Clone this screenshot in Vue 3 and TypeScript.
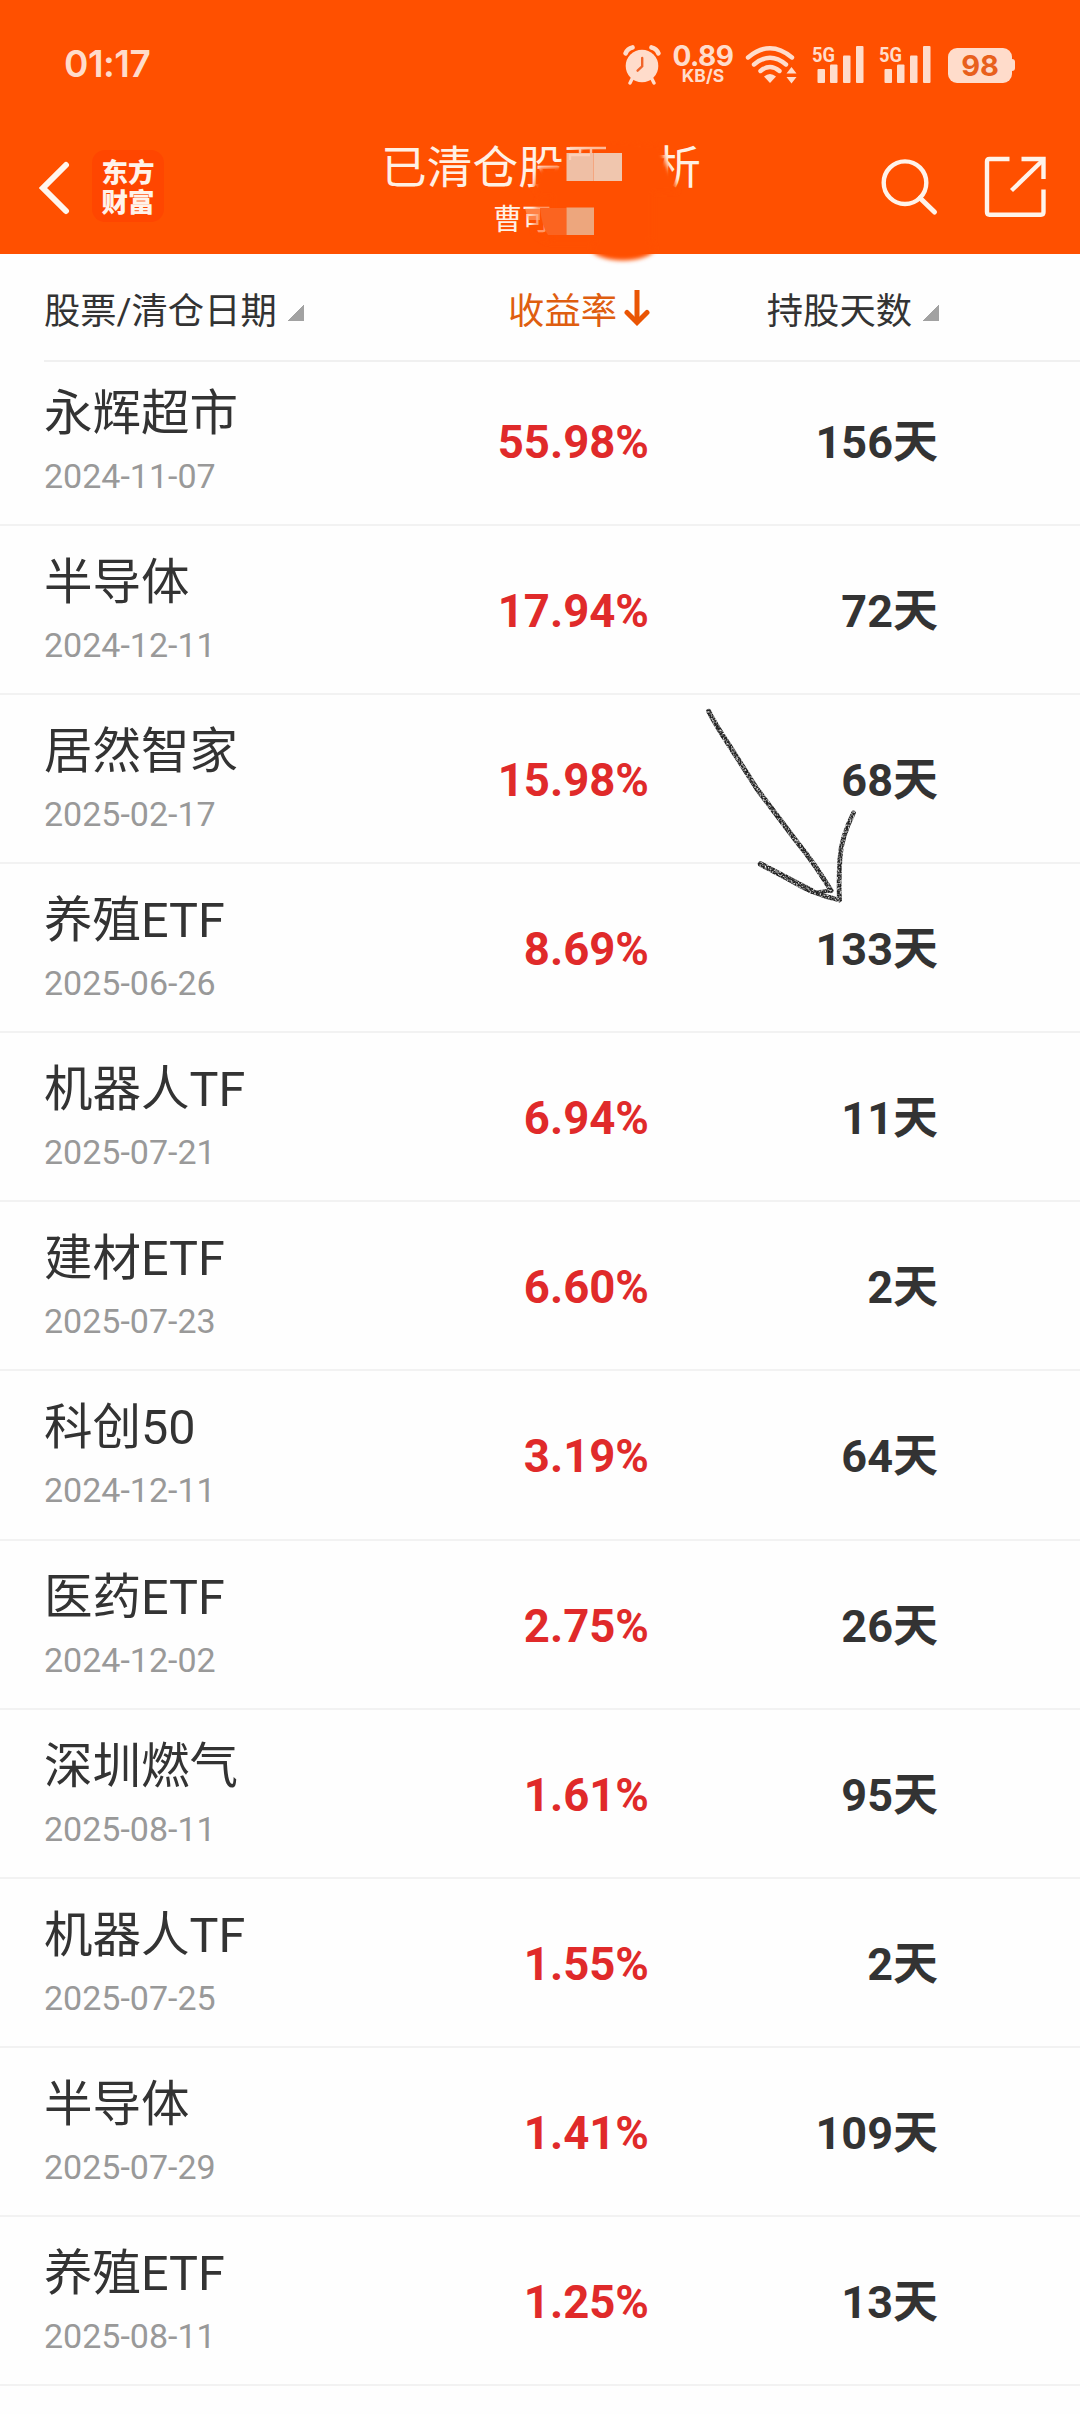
<script setup lang="ts">
interface Position {
  name: string
  date: string
  rate: string
  days: number
}

const positions: Position[] = [
  { name: '永辉超市', date: '2024-11-07', rate: '55.98%', days: 156 },
  { name: '半导体', date: '2024-12-11', rate: '17.94%', days: 72 },
  { name: '居然智家', date: '2025-02-17', rate: '15.98%', days: 68 },
  { name: '养殖ETF', date: '2025-06-26', rate: '8.69%', days: 133 },
  { name: '机器人TF', date: '2025-07-21', rate: '6.94%', days: 11 },
  { name: '建材ETF', date: '2025-07-23', rate: '6.60%', days: 2 },
  { name: '科创50', date: '2024-12-11', rate: '3.19%', days: 64 },
  { name: '医药ETF', date: '2024-12-02', rate: '2.75%', days: 26 },
  { name: '深圳燃气', date: '2025-08-11', rate: '1.61%', days: 95 },
  { name: '机器人TF', date: '2025-07-25', rate: '1.55%', days: 2 },
  { name: '半导体', date: '2025-07-29', rate: '1.41%', days: 109 },
  { name: '养殖ETF', date: '2025-08-11', rate: '1.25%', days: 13 },
]
</script>

<template>
  <div class="screen">
    <header class="top">
      <div class="status">
        <span class="clock">01:17</span>
        <div class="status-icons">
          <svg class="alarm" width="38" height="40" viewBox="0 0 38 40">
            <circle cx="19" cy="21" r="16.3" fill="#ffdccb" />
            <path d="M2.6 8.3Q4.500 3.400 9.500 2.400M35.400 8.300Q33.500 3.400 28.500 2.400" stroke="#ffdccb" stroke-width="4.600" fill="none" stroke-linecap="round" />
            <path d="M9 34l-2 4M29 34l2 4" stroke="#ffdccb" stroke-width="3.400" stroke-linecap="round" />
            <path d="M19.200 13v8.300l-4.600 4.400" stroke="#f0642a" stroke-width="2.400" fill="none" stroke-linecap="round" />
          </svg>
          <div class="speed">
            <b>0.89</b>
            <i>KB/S</i>
          </div>
          <svg class="wifi" width="52" height="40" viewBox="0 0 52 40">
            <g fill="none" stroke="#ffdccb" stroke-width="4.400" stroke-linecap="round">
              <path d="M3 12.500Q25 -6 47 12.500" />
              <path d="M9 19.500Q25 6 41 19.500" />
              <path d="M15.500 26Q25 18 34.500 26" />
            </g>
            <path d="M19 31.500Q25 26.500 31 31.500L25 38z" fill="#ffdccb" />
            <path d="M46.500 22l5 6.500h-10zM46.500 38.500l-5-6.500h10z" fill="#ffdccb" />
          </svg>
          <svg v-for="n in 2" :key="n" class="signal" width="54" height="40" viewBox="0 0 54 40" fill="#ffdccb">
            <text x="1" y="16.500" textLength="23" lengthAdjust="spacingAndGlyphs">5G</text>
            <rect x="6.500" y="24" width="7.500" height="14" rx="1" />
            <rect x="19" y="19.500" width="7.500" height="18.500" rx="1" />
            <rect x="32" y="10.500" width="7.500" height="27.500" rx="1" />
            <rect x="45" y="1" width="7.500" height="37" rx="1" />
          </svg>
          <div class="battery"><span>98</span></div>
        </div>
      </div>
      <div class="nav">
        <div class="nav-left">
          <svg width="32" height="56" viewBox="0 0 32 56">
            <path d="M27 5L4 28l23 23" fill="none" stroke="#fff6ee" stroke-width="6" stroke-linecap="round" stroke-linejoin="miter" />
          </svg>
          <div class="brand"><span>东方</span><span>财富</span></div>
        </div>
        <div class="titles">
          <h1>已清仓股票分析</h1>
          <p>曹可</p>
        </div>
        <div class="nav-right">
          <svg width="60" height="60" viewBox="0 0 60 60" fill="none" stroke="#fff3ea" stroke-width="4.400">
            <circle cx="25" cy="24.700" r="21.300" />
            <path d="M40 40l14.500 14" stroke-width="5" stroke-linecap="round" />
          </svg>
          <svg width="62" height="62" viewBox="0 0 62 62" fill="none" stroke="#fff3ea" stroke-width="4.400">
            <path d="M25.500 3H5.500Q3 3 3 5.500V56Q3 58.700 5.500 58.700H57Q59.500 58.700 59.500 56V33.500" />
            <path d="M37.500 3h22v20" />
            <path d="M58 5L27.500 34.500" />
          </svg>
        </div>
      </div>
      <svg class="mosaic" width="240" height="130" viewBox="480 140 240 130">
        <defs>
          <filter id="soft" x="-30%" y="-30%" width="160%" height="160%"><feGaussianBlur stdDeviation="2.200" /></filter>
        </defs>
        <g fill="#ff5000" filter="url(#soft)">
          <path d="M539 168L562 166L566 153L612 140L661 144Q664 165 674 178L678 192L540 196L534 188z" />
          <path d="M540 193h100v50h-92q-18-6-15-22q2-17 7-28z" opacity="0.550" />
          <path d="M553 190h100v50h-100z" />
          <ellipse cx="623" cy="248" rx="32" ry="12.500" />
        </g>
        <path d="M540 208h26.500v27H548q-6-8-8-27z" fill="#fb6420" />
        <path d="M525 208h15v12h-12z" fill="#ffb48a" opacity="0.500" />
        <path d="M566.500 153h27v28h-27z" fill="#efbfa5" />
        <path d="M593.500 153h28.500v28h-28.500z" fill="#f0c6ae" />
        <path d="M566.500 207.500h27.500v27.500h-27.500z" fill="#eda67d" />
        <path d="M570 148h36M580 148v5M591 148v5M570 160v-5h20" stroke="#ffd5bd" stroke-width="2.400" fill="none" opacity="0.800" />
      </svg>
    </header>

    <div class="columns">
      <div class="col-name">股票/清仓日期<i class="corner"></i></div>
      <div class="col-rate">
        收益率
        <svg width="26" height="37" viewBox="0 0 26 37" fill="none" stroke="#ea5504" stroke-width="5">
          <path d="M13 0v32" />
          <path d="M3 22.500l10 10 10-10" stroke-linecap="round" />
        </svg>
      </div>
      <div class="col-days">持股天数<i class="corner"></i></div>
    </div>

    <main class="list">
      <div v-for="(p, i) in positions" :key="i" class="row">
        <div class="stock">
          <div class="name">{{ p.name }}</div>
          <div class="date">{{ p.date }}</div>
        </div>
        <div class="rate">{{ p.rate }}</div>
        <div class="days">{{ p.days }}天</div>
      </div>
    </main>

    <svg class="pencil" width="170" height="210" viewBox="700 700 170 210">
      <defs>
        <filter id="grain" x="-5%" y="-5%" width="110%" height="110%">
          <feTurbulence type="fractalNoise" baseFrequency="0.600" numOctaves="2" seed="4" result="n" />
          <feColorMatrix in="n" type="matrix" values="0 0 0 0 0  0 0 0 0 0  0 0 0 0 0  2.200 0 0 0 -0.320" result="m" />
          <feComposite in="SourceGraphic" in2="m" operator="in" />
        </filter>
      </defs>
      <g fill="none" stroke="#222" stroke-linecap="round" stroke-linejoin="round" filter="url(#grain)">
        <path d="M708.700 711.300Q717 727 729 745L757 789L797 842Q815 864 831 890.500" stroke-width="5" />
        <path d="M831 890.500L816 892.500" stroke-width="4" />
        <path d="M760.500 864L790 879.500L812 891" stroke-width="5.500" />
        <path d="M761 864L790 880Q812 894 839.500 900" stroke-width="4.500" />
        <path d="M853.500 813Q841 838 840 858Q838.500 880 839.500 900" stroke-width="4.800" />
      </g>
    </svg>
  </div>
</template>

<style>
body {
  margin: 0;
  background: #fefefe;
}
</style>

<style scoped>
.screen {
  position: relative;
  width: 1080px;
  height: 2414px;
  overflow: hidden;
  background: #fefefe;
  color: #333;
  font-family: Roboto, "Noto Sans CJK SC", sans-serif;
}
.top {
  position: relative;
  height: 254px;
  background: #ff5000;
}
.status {
  display: flex;
  justify-content: space-between;
  height: 120px;
  padding: 0 65px 0 64px;
  color: #ffdccb;
}
.clock {
  margin-top: 41px;
  font: 600 37px/46px Inter, sans-serif;
  letter-spacing: -0.5px;
}
.status-icons {
  display: flex;
  align-items: flex-start;
  padding-top: 45px;
}
.speed {
  display: flex;
  flex-direction: column;
  align-items: center;
  width: 62px;
  margin-left: 11px;
  font-family: Inter, sans-serif;
}
.speed b {
  font-size: 28px;
  font-weight: 700;
  line-height: 22px;
  letter-spacing: -0.5px;
}
.speed i {
  font-size: 17.500px;
  font-style: normal;
  font-weight: 700;
  line-height: 18px;
}
.wifi {
  margin-left: 11px;
}
.signal {
  margin-left: 13.500px;
  overflow: visible;
}
.signal text {
  font: 700 21px Roboto, sans-serif;
}
.battery {
  position: relative;
  width: 64px;
  height: 35px;
  margin: 3px 3px 0 16px;
  border-radius: 9px;
  background: #ffdccb;
  color: #e8601c;
  font: 700 29px/35px Inter, sans-serif;
  text-align: center;
}
.battery::after {
  content: "";
  position: absolute;
  top: 11px;
  right: -3px;
  width: 4px;
  height: 12px;
  border-radius: 0 3px 3px 0;
  background: #ffdccb;
}
.nav {
  display: flex;
  justify-content: space-between;
  height: 134px;
}
.nav-left {
  display: flex;
  align-items: flex-start;
  width: 360px;
}
.nav-left svg {
  margin: 40px 0 0 39px;
}
.brand {
  display: flex;
  flex-direction: column;
  align-items: center;
  box-sizing: border-box;
  width: 72px;
  height: 72px;
  margin: 30px 0 0 21px;
  padding-top: 6px;
  border-radius: 13px;
  background: #ff4600;
  color: #fff3ea;
  font: 900 26.500px/30px "Noto Sans CJK SC", sans-serif;
}
.titles {
  width: 360px;
  padding-left: 2px;
  color: #fff0e4;
  text-align: center;
}
h1 {
  margin: 24px 0 0;
  font-size: 45.700px;
  font-weight: 400;
  line-height: 50px;
}
p {
  margin: 9px 0 0;
  padding-right: 38px;
  font-size: 29px;
  line-height: 34px;
}
.nav-right {
  display: flex;
  justify-content: flex-end;
  align-items: flex-start;
  gap: 44px;
  width: 360px;
}
.nav-right svg:first-child {
  margin-top: 38px;
}
.nav-right svg:last-child {
  margin: 36px 34px 0 0;
}
.mosaic {
  position: absolute;
  left: 480px;
  top: 140px;
  z-index: 1;
}
.columns {
  display: flex;
  box-sizing: border-box;
  height: 108px;
  margin-left: 44px;
  padding-right: 141px;
  border-bottom: 2px solid #f0f0f0;
  font-size: 36.300px;
  line-height: 115px;
}
.columns > div {
  display: flex;
}
.col-name {
  width: 350px;
}
.col-rate {
  justify-content: flex-end;
  width: 256px;
  color: #df5e10;
}
.col-rate svg {
  margin: 36px 0 0 7px;
}
.col-days {
  flex: 1;
  justify-content: flex-end;
}
.corner {
  width: 16px;
  height: 16px;
  margin: 51px 0 0 11px;
  background: linear-gradient(135deg, transparent 50%, #a2a2a2 50%);
}
.list {
  overflow: hidden;
}
.row {
  display: flex;
  box-sizing: border-box;
  height: 169.080px;
  padding: 0 142px 0 44px;
  border-bottom: 2px solid #f2f2f2;
}
.row:first-child {
  margin-top: -5px;
}
.stock {
  width: 350px;
  padding-top: 27px;
}
.name {
  font-size: 48.500px;
  line-height: 60px;
}
.date {
  margin-top: 12px;
  color: #999;
  font-size: 34px;
  line-height: 40px;
}
.rate {
  width: 255px;
  color: #e02a2a;
  font-size: 45.500px;
  font-weight: 700;
  line-height: 172px;
  text-align: right;
}
.days {
  flex: 1;
  font-size: 45px;
  font-weight: 700;
  line-height: 172px;
  text-align: right;
}
.pencil {
  position: absolute;
  left: 700px;
  top: 700px;
}
</style>
